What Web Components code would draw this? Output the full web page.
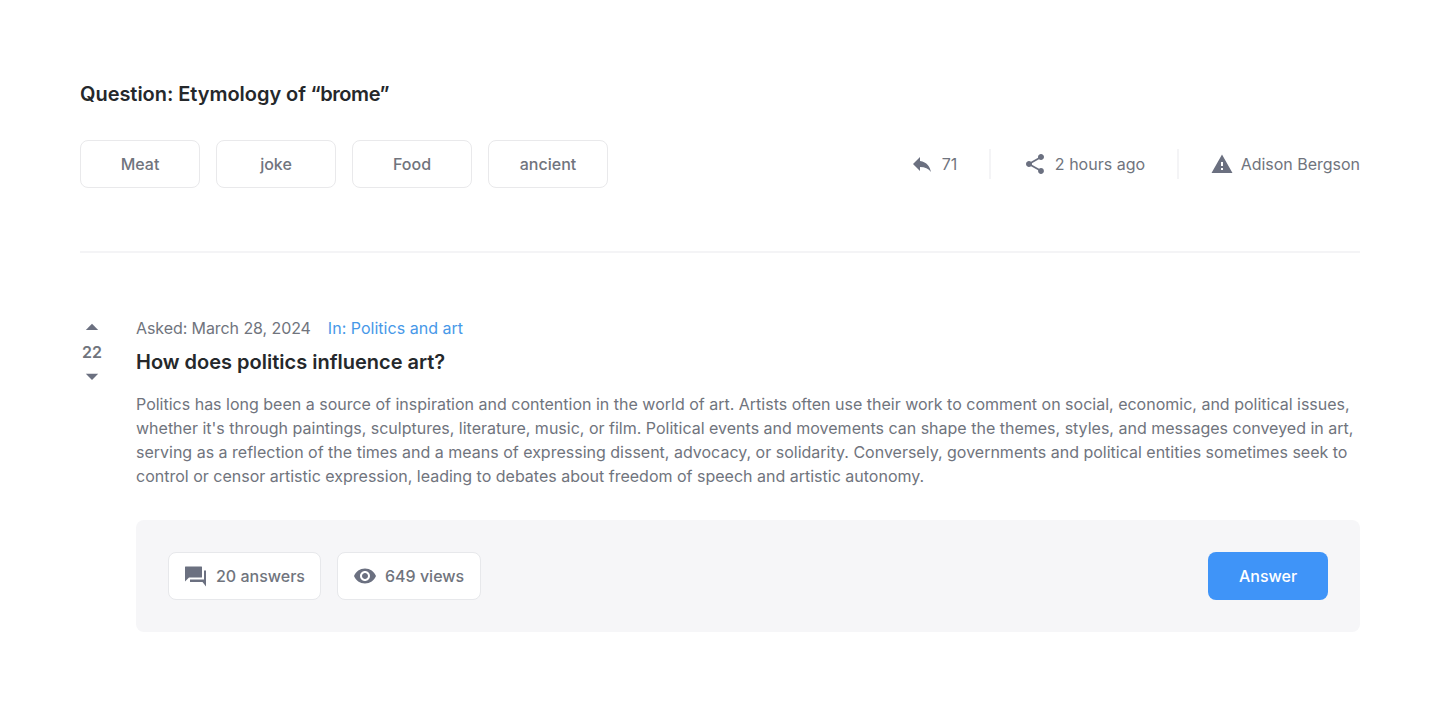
<!DOCTYPE html>
<html lang="en">
<head>
<meta charset="utf-8">
<title>Question</title>
<style>
body{margin:0;background:#fff;font-family:Inter,"Liberation Sans",sans-serif;font-size:16px;line-height:24px;color:#70747d}
</style>
</head>
<body>
<question-page></question-page>
<script>
const define = (name, html) => customElements.define(name, class extends HTMLElement {
  constructor() {
    super();
    this.attachShadow({ mode: 'open' }).innerHTML = html;
  }
});

const ICONS = {
  reply: '<path d="M10 9V5l-7 7 7 7v-4.1c5 0 8.5 1.6 11 5.1-1-5-4-10-11-11z"/>',
  share: '<path d="M18 16.08c-.76 0-1.44.3-1.96.77L8.91 12.7c.05-.23.09-.46.09-.7s-.04-.47-.09-.7l7.05-4.11c.54.5 1.25.81 2.04.81 1.66 0 3-1.34 3-3s-1.34-3-3-3-3 1.34-3 3c0 .24.04.47.09.7L8.04 9.81C7.5 9.31 6.79 9 6 9c-1.66 0-3 1.34-3 3s1.34 3 3 3c.79 0 1.5-.31 2.04-.81l7.12 4.16c-.05.21-.08.43-.08.65 0 1.61 1.31 2.92 2.92 2.92s2.92-1.31 2.92-2.92-1.31-2.92-2.92-2.92z"/>',
  warning: '<path d="M1.500 21h21L12 2.500 1.500 21zm11.500-3h-2v-2h2v2zm0-4h-2v-4h2v4z"/>',
  forum: '<path d="M22 6.500h-2v9H6v2.500h12.500l3.500 4.500v-16zM18 3q0-.5-.5-.5H1.500q-.5 0-.5.5v14.500l4-4h12.500q.5 0 .5-.5V3z"/>',
  eye: '<path d="M12 4.500C7 4.500 2.730 7.610 1 12c1.730 4.390 6 7.500 11 7.500s9.270-3.110 11-7.500c-1.730-4.390-6-7.500-11-7.500zM12 17c-2.760 0-5-2.240-5-5s2.240-5 5-5 5 2.240 5 5-2.240 5-5 5zm0-8c-1.660 0-3 1.340-3 3s1.340 3 3 3 3-1.340 3-3-1.340-3-3-3z"/>',
  up: '<path d="M5.800 14L12 7.800l6.200 6.200z"/>',
  down: '<path d="M5.800 9.800L12 16l6.200-6.200z"/>'
};

customElements.define('ui-icon', class extends HTMLElement {
  connectedCallback() {
    if (this.shadowRoot) return;
    this.attachShadow({ mode: 'open' }).innerHTML = `
      <style>:host{display:block;flex:none;width:24px;height:24px;color:#6b7080}svg{display:block;width:100%;height:100%;fill:currentColor}</style>
      <svg viewBox="0 0 24 24">${ICONS[this.getAttribute('name')]}</svg>`;
  }
});

define('tag-chip', `
  <style>:host{box-sizing:border-box;display:flex;align-items:center;justify-content:center;width:120px;height:48px;border:1px solid #e9e9eb;border-radius:8px;background:#fff;font-weight:500}</style>
  <slot></slot>`);

define('meta-item', `
  <style>:host{display:flex;align-items:center;gap:8px;height:24px}</style>
  <slot name="icon"></slot><span><slot></slot></span>`);

define('meta-divider', `
  <style>:host{display:block;width:2px;height:30px;background:#f4f4f6}</style>`);

define('stat-chip', `
  <style>:host{box-sizing:border-box;display:flex;align-items:center;gap:8px;height:48px;padding:0 15px;border:1px solid #e7e8eb;border-radius:8px;background:#fff;font-weight:500}</style>
  <slot name="icon"></slot><span><slot></slot></span>`);

define('answer-button', `
  <style>:host{display:block}button{display:block;width:120px;height:48px;border:0;border-radius:8px;background:#3f94f8;color:#fff;font:inherit;font-weight:500;padding:0}</style>
  <button type="button"><slot></slot></button>`);

define('vote-control', `
  <style>:host{display:flex;flex-direction:column;align-items:center;width:24px;font-weight:600}</style>
  <ui-icon name="up"></ui-icon><span><slot></slot></span><ui-icon name="down"></ui-icon>`);

define('question-header', `
  <style>
    :host{display:block;padding-bottom:63px;border-bottom:2px solid #f4f4f6}
    h1{margin:0 0 32px;font-size:20px;line-height:28px;font-weight:600;color:#25282b;letter-spacing:-.04px}
    h1 span{letter-spacing:-.45px}
    .row{display:flex;justify-content:space-between;align-items:center}
    .tags{display:flex;gap:16px}
    .meta{display:flex;align-items:center;gap:32px}
    .ago{letter-spacing:.02px;margin-right:-.5px}
    .replies{margin-right:-.5px}
    .author{letter-spacing:-.02px;margin-left:-1px}
  </style>
  <h1>Question: Etymology of<span> “brome”</span></h1>
  <div class="row">
    <div class="tags"><tag-chip>Meat</tag-chip><tag-chip>joke</tag-chip><tag-chip>Food</tag-chip><tag-chip>ancient</tag-chip></div>
    <div class="meta">
      <meta-item class="replies"><ui-icon slot="icon" name="reply"></ui-icon>71</meta-item>
      <meta-divider></meta-divider>
      <meta-item class="ago"><ui-icon slot="icon" name="share"></ui-icon>2 hours ago</meta-item>
      <meta-divider></meta-divider>
      <meta-item class="author"><ui-icon slot="icon" name="warning" style="margin-right:-1px"></ui-icon>Adison Bergson</meta-item>
    </div>
  </div>`);

define('question-card', `
  <style>
    :host{display:flex;gap:32px;margin-top:63px}
    article{flex:1;min-width:0}
    .info{display:flex;gap:17px;letter-spacing:-.08px}
    .topic{color:#4798e8;letter-spacing:.02px}
    h2{margin:8px 0 16px;font-size:20px;line-height:28px;font-weight:600;color:#25282b}
    p{margin:0 0 32px}
    .bar{display:flex;align-items:center;gap:16px;padding:32px;border-radius:8px;background:#f6f6f8}
    answer-button{margin-left:auto}
  </style>
  <vote-control>22</vote-control>
  <article>
    <div class="info"><span>Asked: March 28, 2024</span><span class="topic">In: Politics and art</span></div>
    <h2>How does politics influence art?</h2>
    <p>Politics has long been a source of inspiration and contention in the world of art. Artists often use their work to comment on social, economic, and political issues, whether it's through paintings, sculptures, literature, music, or film. Political events and movements can shape the themes, styles, and messages conveyed in art, serving as a reflection of the times and a means of expressing dissent, advocacy, or solidarity. Conversely, governments and political entities sometimes seek to control or censor artistic expression, leading to debates about freedom of speech and artistic autonomy.</p>
    <div class="bar">
      <stat-chip><ui-icon slot="icon" name="forum"></ui-icon>20 answers</stat-chip>
      <stat-chip style="padding-right:16px"><ui-icon slot="icon" name="eye"></ui-icon>649 views</stat-chip>
      <answer-button>Answer</answer-button>
    </div>
  </article>`);

define('question-page', `
  <style>:host{display:block;padding:80px}</style>
  <question-header></question-header>
  <question-card></question-card>`);
</script>
</body>
</html>
